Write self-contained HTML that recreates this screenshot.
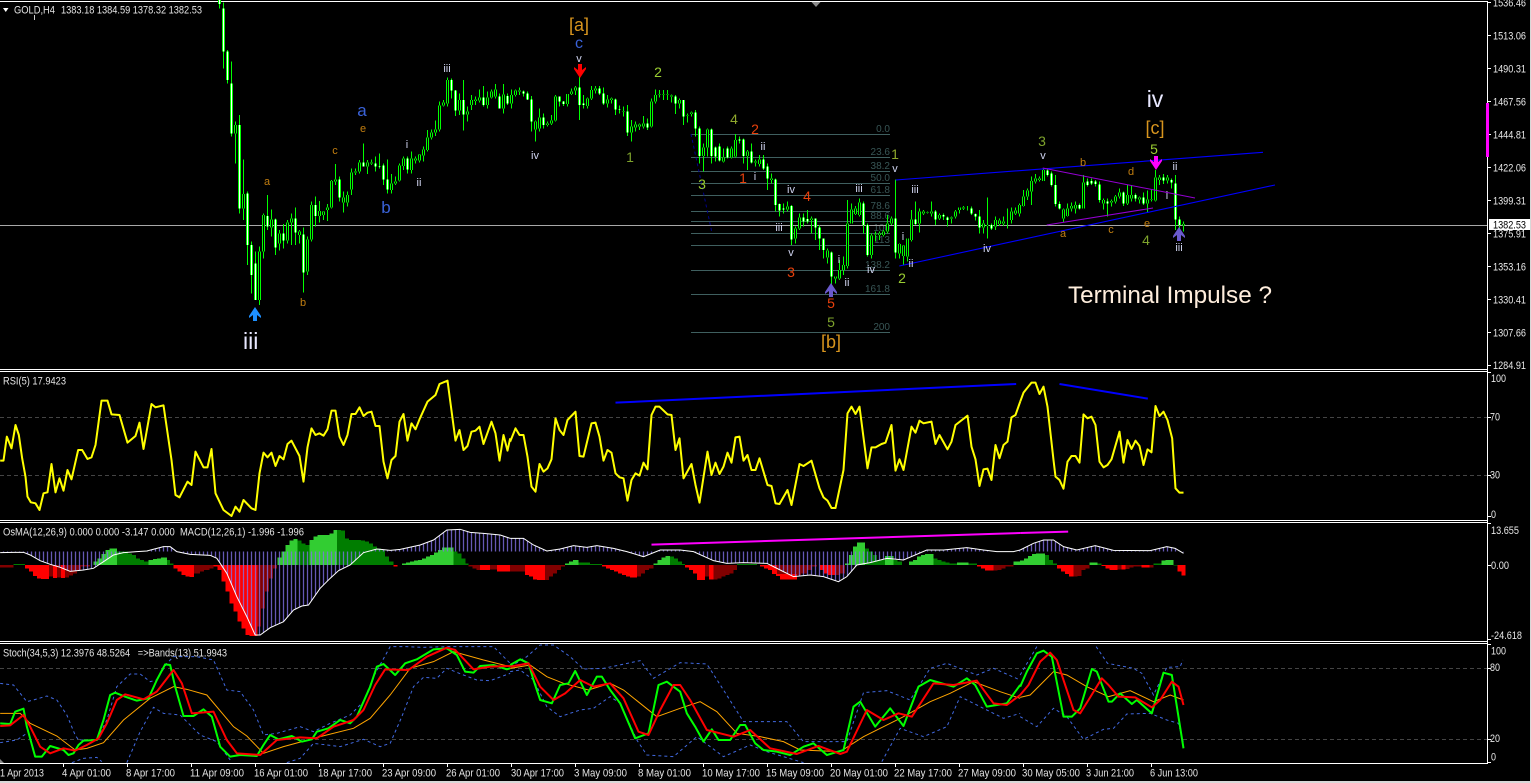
<!DOCTYPE html>
<html><head><meta charset="utf-8"><title>GOLD,H4</title>
<style>
html,body{margin:0;padding:0;background:#000;width:1531px;height:783px;overflow:hidden}
svg{display:block;font-family:"Liberation Sans",sans-serif}
text{fill:#e4e4e4;font-size:11px}
.k{stroke:#0f0;stroke-width:3;fill:none}
.o{stroke:#0f0;stroke-width:9;fill:none}
.wi{stroke:#fff;stroke-width:3;fill:none}
.bi{stroke:#000;stroke-width:3;fill:none}
.rsi{fill:none;stroke:#ff0;stroke-width:6;stroke-linejoin:round}
.ml{fill:none;stroke:#fff;stroke-width:3}
.sg{fill:none;stroke:#0f0;stroke-width:6;stroke-linejoin:round}
.sr{fill:none;stroke:#f00;stroke-width:6;stroke-linejoin:round}
.so{fill:none;stroke:#ffa500;stroke-width:3}
.sb{fill:none;stroke:#4169e1;stroke-width:3;stroke-dasharray:9 9}
.lb text,text.l{fill:#d0d4f0;font-size:11px;text-anchor:middle}
text.o1{fill:#c27e10;font-size:11px;text-anchor:middle}
text.br{fill:#d8951e;font-size:18px;text-anchor:middle}
text.g{fill:#9acd32;font-size:14px;text-anchor:middle}
text.r{fill:#e8400c;font-size:14px;text-anchor:middle}
text.b{fill:#3a62d8;font-size:17px;text-anchor:middle}
text.w{fill:#e8e8ff;font-size:23px;text-anchor:middle}
text.f{fill:#385656;font-size:10px;text-anchor:end}
text.ax{font-size:11px;fill:#e8e8e8}
</style></head><body>
<svg width="1531" height="783" viewBox="0 0 1531 783" xmlns="http://www.w3.org/2000/svg">
<defs>
<path id="W1" d="M658 0V12M670 25V155M682 155V240M694 250V400M718 375V625M742 580V735M754 735V825M766 790V900M802 648V680M826 658V742M850 700V722M886 655V698M910 703V818M946 615V648M1018 538V592M1090 487V500M1126 490V500M1138 498V500M1150 497V538M1162 538V568M1222 475V508M1354 240V272M1366 272V332M1390 300V344M1450 292V315M1498 290V325M1522 288V310"/>
<path id="B1" d="M706 375V400M730 582V625M778 755V900M790 645V755M814 658V682M838 700V730M862 668V722M874 655V668M898 695V705M922 718V815M934 615V718M958 633V648M970 635V645M982 622V630M994 543V622M1006 538V545M1030 592V608M1042 585V608M1054 518V568M1066 515V518M1078 487V515M1102 487V500M1114 487V490M1174 550V570M1186 545V550M1198 497V542M1210 475V498M1234 475V510M1246 475V482M1258 464V482M1270 448V466M1282 412V450M1294 397V412M1306 388V397M1318 316V388M1330 308V316M1342 240V310M1378 300V332M1402 334V344M1414 300V315M1426 298V303M1438 292V302M1462 292V315M1474 275V292M1486 268V290M1510 283V325"/>
<path id="W2" d="M40 275V280M52 280V298M64 298V365M100 352V375M148 290V305M160 305V312M208 262V315M220 310V315M268 265V280M280 280V310M316 298V328M328 328V330M352 335V398M412 370V382M496 290V310M520 300V350M556 338V385M568 385V468M604 388V468M616 443V470M628 440V482M652 445V472M688 418V422M700 418V468M724 455V488M760 478V505M772 500V535M796 538V615M808 612V632M820 628V625M844 618V718M880 652V665M892 657V665M916 655V682M928 682V715M940 715V750M964 757V830M1060 610V675M1072 675V765M1156 655V758M1216 658V672M1276 635V658M1300 645V650M1312 652V660M1384 625V640M1396 642V650M1408 650V682M1444 675V685"/>
<path id="B2" d="M4 285V310M16 272V285M28 272V275M76 365V388M88 352V385M112 370V375M124 362V370M136 290V362M172 282V312M184 275V282M196 262V272M232 295V318M244 270V296M256 265V272M292 298V310M304 296V300M340 333V335M364 380V398M376 374V382M388 374V380M400 370V380M424 305V380M436 285V305M448 283V285M460 283V285M472 283V285M484 286V290M508 300V310M532 347V345M544 342V338M580 443V468M592 388V443M640 472V485M664 445V472M676 420V470M712 455V468M736 487V485M748 478V492M784 535V540M832 620V628M856 685V715M868 652V685M904 655V660M952 752V772M976 830V835M988 810V835M1000 795V810M1012 670V798M1024 628V670M1036 625V642M1048 608V645M1084 706V765M1096 703V705M1108 700V705M1120 695V705M1132 670V695M1144 655V670M1168 732V760M1180 737V768M1192 715V770M1204 658V720M1228 635V670M1240 635V640M1252 638V636M1264 635V640M1288 645V655M1324 652V655M1336 635V650M1348 630V622M1360 625V622M1372 622V622M1420 670V682M1432 675V678M1456 660V680M1468 662V672M1480 665V670M1492 660V660M1504 635V660M1516 632V640M1528 615V640"/>
<path id="W3" d="M82 512V525M94 520V555M106 555V612M118 612V625M178 615V625M202 545V555M214 543V550M226 545V552M238 553V600M262 605V610M310 578V610M346 585V595M370 592V610M430 532V542M454 540V548M466 550V658M478 658V675"/>
<path id="B3" d="M10 590V618M22 572V590M34 543V575M46 535V545M58 535V540M70 510V543M130 628V655M142 625V648M154 618V625M166 615V625M190 548V625M250 600V610M274 603V608M286 590V605M298 578V590M322 585V610M334 585V595M358 592V598M382 598V610M394 600V598M406 532V602M418 532V540M442 532V542M490 672V676"/>
<pattern id="p1" patternUnits="userSpaceOnUse" width="12" height="12"><rect x="8.5" width="3" height="12" fill="#8271e8"/></pattern>
<pattern id="p2" patternUnits="userSpaceOnUse" width="12" height="12"><rect x="2.5" width="3" height="12" fill="#8271e8"/></pattern>
</defs>

<!-- frame -->
<g fill="#fff" shape-rendering="crispEdges">
<rect x="0" y="1" width="1488" height="1"/>
<rect x="0" y="369" width="1488" height="1"/><rect x="0" y="371" width="1488" height="1"/>
<rect x="0" y="520" width="1488" height="1"/><rect x="0" y="522" width="1488" height="1"/>
<rect x="0" y="641" width="1488" height="1"/><rect x="0" y="643" width="1488" height="1"/>
<rect x="0" y="763" width="1488" height="1"/>
<rect x="1487" y="1" width="1" height="763"/>
<rect x="0" y="781" width="1531" height="2" fill="#d8d8d8"/>
<rect x="1530" y="0" width="1" height="783" fill="#d8d8d8"/>
</g>

<!-- indicator grid -->
<g stroke="#444" stroke-dasharray="4 3" shape-rendering="crispEdges">
<path d="M0 417.5H1487M0 475.5H1487M0 668.5H1487M0 739.5H1487"/>
</g>

<!-- fib levels -->
<path d="M691 134.5H890M691 157.5H890M691 171.5H890M691 183.5H890M691 195.5H890M691 211.5H890M691 221.5H890M691 233.5H890M691 245.5H890M691 270.5H890M691 294.5H890M691 332.5H890" stroke="#3f5f5f" shape-rendering="crispEdges"/>
<path d="M691 134L712 233" stroke="#00008b" stroke-dasharray="3 3" fill="none"/>
<g>
<text class="f" x="890" y="132">0.0</text><text class="f" x="890" y="155">23.6</text><text class="f" x="890" y="169">38.2</text><text class="f" x="890" y="181">50.0</text><text class="f" x="890" y="193">61.8</text><text class="f" x="890" y="209">78.6</text><text class="f" x="890" y="219">88.6</text><text class="f" x="890" y="231">100</text><text class="f" x="890" y="243">113</text><text class="f" x="890" y="268">138.2</text><text class="f" x="890" y="292">161.8</text><text class="f" x="890" y="330">200</text>
</g>

<!-- price line -->
<rect x="0" y="225" width="1487" height="1" fill="#a8a8a8" shape-rendering="crispEdges"/>

<!-- candles -->
<g transform="translate(.17 0) scale(.33333)" shape-rendering="crispEdges">
<path class="k" d="M658 0V25M670 8V205M682 150V250M694 185V410M706 365V490M718 345V640M730 478V660M742 575V795M754 725V880M766 755V900M778 740V915M790 640V775M802 585V690M814 628V710M826 655V765M838 690V752M850 672V745M862 660V730M874 640V735M886 622V735M898 690V730M910 682V878M922 710V825M934 605V725M946 590V680M958 603V668M970 633V660M982 612V663M994 540V625M1006 492V555M1018 530V605M1030 575V638M1042 575V620M1054 505V585M1066 505V525M1078 480V520M1090 430V500M1102 480V522M1114 478V495M1126 470V515M1138 460V505M1150 490V555M1162 478V580M1174 522V580M1186 530V555M1198 490V545M1210 470V510M1222 470V520M1234 455V520M1246 470V490M1258 462V488M1270 440V485M1282 390V455M1294 388V418M1306 362V408M1318 305V395M1330 300V320M1342 232V320M1354 235V295M1366 270V348M1378 280V345M1390 240V392M1402 320V365M1414 285V330M1426 290V315M1438 268V308M1450 258V320M1462 275V325M1474 268V295M1486 252V295M1498 280V325M1510 252V340M1522 280V315"/>
<use href="#W1" class="o"/><use href="#B1" class="o"/><use href="#W1" class="wi"/><use href="#B1" class="bi"/>
</g>
<g transform="translate(510.17 0) scale(.33333)" shape-rendering="crispEdges">
<path class="k" d="M4 268V325M16 268V290M28 262V285M40 272V290M52 275V300M64 288V395M76 362V425M88 325V395M100 340V385M112 365V380M124 345V375M136 285V365M148 290V320M160 303V318M172 282V320M184 265V285M196 258V285M208 225V360M220 285V325M232 292V325M244 258V300M256 258V280M268 258V285M280 262V315M292 285V322M304 293V310M316 295V345M328 316V340M340 320V350M352 315V408M364 360V425M376 365V395M388 370V390M400 348V385M412 355V390M424 295V382M436 268V310M448 270V292M460 270V300M472 270V300M484 283V308M496 285V342M508 295V325M520 300V375M532 340V368M544 335V350M556 330V410M568 380V490M580 430V515M592 385V470M604 385V490M616 440V485M628 430V485M640 445V488M652 440V475M664 440V475M676 402V472M688 410V430M700 415V490M712 450V510M724 430V490M736 478V500M748 465V500M760 465V510M772 490V570M784 520V550M796 535V635M808 610V650M820 610V640M832 605V635M844 615V735M856 680V730M868 640V690M880 640V680M892 630V670M904 650V700M916 655V720M928 675V750M940 715V775M952 745V790M964 755V855M976 830V850M988 780V840M1000 770V825M1012 600V805M1024 610V670M1036 618V645M1048 595V650M1060 605V700M1072 670V770M1084 700V775M1096 695V725M1108 695V720M1120 690V710M1132 645V700M1144 650V675M1156 538V775M1168 730V775M1180 735V795M1192 715V785M1204 630V725M1216 605V675M1228 625V698M1240 630V645M1252 635V640M1264 605V650M1276 630V675M1288 640V660M1300 640V660M1312 650V680M1324 650V670M1336 630V655M1348 625V640M1360 618V630M1372 618V632M1384 620V645M1396 640V662M1408 630V700M1420 660V700M1432 592V715M1444 670V690M1456 650V690M1468 655V678M1480 650V678M1492 625V685M1504 622V670M1516 622V645M1528 610V650"/>
<use href="#W2" class="o"/><use href="#B2" class="o"/><use href="#W2" class="wi"/><use href="#B2" class="bi"/>
</g>
<g transform="translate(1020.17 0) scale(.33333)" shape-rendering="crispEdges">
<path class="k" d="M10 570V620M22 565V600M34 530V615M46 522V550M58 530V545M70 505V540M82 505V530M94 515V560M106 525V620M118 605V628M130 625V668M142 610V650M154 608V635M166 605V640M178 610V628M190 525V625M202 535V560M214 535V555M226 540V560M238 545V608M250 595V628M262 595V650M274 598V620M286 585V610M298 565V595M310 575V618M322 555V615M334 555V605M346 580V605M358 590V610M370 578V615M382 572V638M394 570V605M406 510V605M418 525V555M430 522V552M442 525V550M454 535V565M466 525V690M478 650V700M490 665V695"/>
<use href="#W3" class="o"/><use href="#B3" class="o"/><use href="#W3" class="wi"/><use href="#B3" class="bi"/>
</g>

<!-- trend lines -->
<path d="M895.7 180L1263 152.3M899.3 266L1275 185" stroke="#00f" fill="none" stroke-width="1.1"/>
<path d="M1042.7 168L1195 198M1046.7 225L1153 208" stroke="#9400d3" fill="none"/>

<!-- arrows -->
<polygon transform="translate(255 307)" points="0,0 6,9 6,11 2,8 2,14 -2,14 -2,8 -6,11 -6,9" fill="#1e90ff"/>
<polygon transform="translate(580 78) scale(1 -1)" points="0,0 6,9 6,11 2,8 2,14 -2,14 -2,8 -6,11 -6,9" fill="#f00"/>
<polygon transform="translate(831 283)" points="0,0 6,9 6,11 2,8 2,14 -2,14 -2,8 -6,11 -6,9" fill="#6a5acd"/>
<polygon transform="translate(1156 170) scale(1 -1)" points="0,0 6,9 6,11 2,8 2,14 -2,14 -2,8 -6,11 -6,9" fill="#f0f"/>
<polygon transform="translate(1179 227)" points="0,0 6,9 6,11 2,8 2,14 -2,14 -2,8 -6,11 -6,9" fill="#6a5acd"/>

<!-- wave labels -->
<text class="b" x="362" y="116">a</text>
<text class="b" x="386" y="213">b</text>
<text class="b" x="579" y="48" style="font-size:16px">c</text>
<text class="o1" x="363" y="132">e</text><text class="o1" x="335" y="154">c</text><text class="o1" x="267" y="185">a</text><text class="o1" x="303" y="306">b</text>
<text class="o1" x="1083" y="166">b</text><text class="o1" x="1131" y="175">d</text><text class="o1" x="1147" y="227">e</text><text class="o1" x="1063" y="237">a</text><text class="o1" x="1111" y="233">c</text>
<text class="l" x="407" y="148">i</text><text class="l" x="419" y="186">ii</text><text class="l" x="447" y="72">iii</text>
<text class="l" x="579" y="62">v</text><text class="l" x="535" y="159">iv</text><text class="l" x="763" y="150">ii</text><text class="l" x="755" y="180">i</text><text class="l" x="791" y="193">iv</text><text class="l" x="779" y="231">iii</text><text class="l" x="791" y="256">v</text><text class="l" x="859" y="192">iii</text><text class="l" x="915" y="193">iii</text><text class="l" x="895" y="172">v</text><text class="l" x="839" y="263">i</text><text class="l" x="847" y="286">ii</text><text class="l" x="871" y="273">iv</text><text class="l" x="903" y="240">i</text><text class="l" x="911" y="267">ii</text><text class="l" x="987" y="252">iv</text>
<text class="l" x="1043" y="159">v</text><text class="l" x="1175" y="170">ii</text><text class="l" x="1167" y="199">i</text><text class="l" x="1179" y="251">iii</text>
<text class="br" x="579" y="31">[a]</text><text class="br" x="831" y="348">[b]</text><text class="br" x="1155" y="134">[c]</text>
<text class="g" x="658" y="77">2</text><text class="g" x="630" y="162" style="fill:#7ea32c">1</text><text class="g" x="734" y="124" style="fill:#8fa82c">4</text><text class="g" x="702" y="189">3</text><text class="g" x="895" y="159" style="fill:#8fa82c">1</text><text class="g" x="902" y="283">2</text><text class="g" x="831" y="327" style="fill:#7ea32c">5</text><text class="g" x="1042" y="146" style="fill:#7ea32c">3</text><text class="g" x="1154" y="154">5</text><text class="g" x="1146" y="245" style="fill:#7ea32c">4</text>
<text class="r" x="755" y="134">2</text><text class="r" x="743" y="183">1</text><text class="r" x="807" y="201">4</text><text class="r" x="791" y="277">3</text><text class="r" x="831" y="308">5</text>
<text class="w" x="250.700" y="349">iii</text><text class="w" x="1155" y="107">iv</text>
<text x="1068" y="303" style="font-size:24px;fill:#ffeedd" textLength="204" lengthAdjust="spacingAndGlyphs">Terminal Impulse ?</text>

<!-- header -->
<polygon points="3,8 8.500,8 5.750,12" fill="#fff"/>
<rect x="34" y="15" width="1" height="5" fill="#ccc"/>
<polygon points="811.500,2 820.500,2 816,7" fill="#8a8a8a"/>
<text x="14" y="13.500" textLength="41" lengthAdjust="spacingAndGlyphs">GOLD,H4</text>
<text x="61" y="13.500" textLength="141" lengthAdjust="spacingAndGlyphs">1383.18 1384.59 1378.32 1382.53</text>

<!-- price axis -->
<g shape-rendering="crispEdges" stroke="#fff">
<path d="M1488 2.500H1491M1488 35.500H1491M1488 68.500H1491M1488 101.500H1491M1488 134.500H1491M1488 167.500H1491M1488 200.500H1491M1488 233.500H1491M1488 266.500H1491M1488 299.500H1491M1488 332.500H1491M1488 365.500H1491M1488 372.500H1491M1488 417.500H1491M1488 475.500H1491M1488 516.500H1491M1488 523.500H1491M1488 565.500H1491M1488 639.500H1491M1488 644.500H1491M1488 668.500H1491M1488 739.500H1491M1488 762.500H1491"/>
</g>
<g class="ax">
<text class="ax" x="1493" y="6.500" textLength="33" lengthAdjust="spacingAndGlyphs">1536.46</text>
<text class="ax" x="1493" y="39.500" textLength="33" lengthAdjust="spacingAndGlyphs">1513.06</text>
<text class="ax" x="1493" y="72.500" textLength="33" lengthAdjust="spacingAndGlyphs">1490.31</text>
<text class="ax" x="1493" y="105.500" textLength="33" lengthAdjust="spacingAndGlyphs">1467.56</text>
<text class="ax" x="1493" y="138.500" textLength="33" lengthAdjust="spacingAndGlyphs">1444.81</text>
<text class="ax" x="1493" y="171.500" textLength="33" lengthAdjust="spacingAndGlyphs">1422.06</text>
<text class="ax" x="1493" y="204.500" textLength="33" lengthAdjust="spacingAndGlyphs">1399.31</text>
<text class="ax" x="1493" y="237.500" textLength="33" lengthAdjust="spacingAndGlyphs">1375.91</text>
<text class="ax" x="1493" y="270.500" textLength="33" lengthAdjust="spacingAndGlyphs">1353.16</text>
<text class="ax" x="1493" y="303.500" textLength="33" lengthAdjust="spacingAndGlyphs">1330.41</text>
<text class="ax" x="1493" y="336.500" textLength="33" lengthAdjust="spacingAndGlyphs">1307.66</text>
<text class="ax" x="1493" y="369" textLength="33" lengthAdjust="spacingAndGlyphs">1284.91</text>
</g>
<rect x="1489" y="219" width="41" height="11" fill="#fff" shape-rendering="crispEdges"/>
<text x="1493" y="228.500" style="fill:#000" textLength="33" lengthAdjust="spacingAndGlyphs">1382.53</text>
<rect x="1486" y="103" width="3" height="54" fill="#f0f" shape-rendering="crispEdges"/>
<text class="ax" x="1491" y="382" textLength="15" lengthAdjust="spacingAndGlyphs">100</text><text class="ax" x="1490" y="420.500" textLength="10" lengthAdjust="spacingAndGlyphs">70</text><text class="ax" x="1490" y="478.500" textLength="10" lengthAdjust="spacingAndGlyphs">30</text><text class="ax" x="1491" y="518" textLength="5" lengthAdjust="spacingAndGlyphs">0</text>
<text class="ax" x="1491" y="534" textLength="28" lengthAdjust="spacingAndGlyphs">13.655</text><text class="ax" x="1491" y="569" textLength="18" lengthAdjust="spacingAndGlyphs">0.00</text><text class="ax" x="1491" y="639" textLength="31" lengthAdjust="spacingAndGlyphs">-24.618</text>
<text class="ax" x="1491" y="654.500" textLength="15" lengthAdjust="spacingAndGlyphs">100</text><text class="ax" x="1490" y="671" textLength="10" lengthAdjust="spacingAndGlyphs">80</text><text class="ax" x="1490" y="742" textLength="10" lengthAdjust="spacingAndGlyphs">20</text><text class="ax" x="1491" y="760.500" textLength="5" lengthAdjust="spacingAndGlyphs">0</text>

<!-- indicator labels -->
<text x="3" y="384.500" textLength="63" lengthAdjust="spacingAndGlyphs">RSI(5) 17.9423</text>
<text x="3" y="535.500" textLength="301" lengthAdjust="spacingAndGlyphs" xml:space="preserve">OsMA(12,26,9) 0.000 0.000 -3.147 0.000  MACD(12,26,1) -1.996 -1.996</text>
<text x="3" y="656.500" textLength="224" lengthAdjust="spacingAndGlyphs" xml:space="preserve">Stoch(34,5,3) 12.3976 48.5264   =&gt;Bands(13) 51.9943</text>

<!-- PANEL 1 -->
<g transform="translate(.17 370) scale(.33333)">
<polyline class="rsi" points="0,272 10,272 20,200 34,235 46,165 56,195 66,265 76,320 82,380 92,397 106,400 118,420 130,370 142,367 154,282 166,367 178,325 190,362 202,300 214,328 234,240 246,240 262,267 274,262 286,225 304,92 322,92 334,133 358,135 382,218 406,198 418,158 430,237 454,102 466,112 490,106 514,270 526,375 538,382 562,335 574,345 586,245 610,292 622,292 634,237 646,370 670,420 694,438 706,410 718,425 730,390 754,415 766,420 778,310 790,248 802,262 814,248 826,288 838,258 850,268 862,222 874,212 898,258 910,335 922,232 934,175 946,195 958,190 970,197 982,178 994,122 1006,122 1018,200 1030,225 1042,195 1054,132 1066,132 1078,112 1090,138 1102,128 1114,125 1126,168 1138,168 1150,275 1162,325 1174,270 1186,258 1198,155 1210,132 1222,212 1234,160 1246,178 1258,148 1282,95 1306,75 1318,42 1342,32 1366,212 1378,180 1390,240 1402,228 1414,185 1426,182 1438,170 1450,222 1474,155 1486,190 1498,272 1510,195 1522,242 1530,205"/>
<g shape-rendering="crispEdges">
<path fill="#f00" d="M75 585V595H87V605H99V618H111V625H123V627H147V585ZM159 585V624H171V585ZM183 585V624H195V585ZM520 585V595H532V605H544V615H556V620H568V621H582V585ZM640 585V590H652V600H664V635H676V665H688V700H700V725H712V755H724V775H736V795H748V798H772V585ZM1180 585V590H1192V585ZM1440 585V600H1470V585ZM1490 585V605H1530V585Z"/>
<path fill="#800000" d="M0 585V592H40V585ZM147 585V620H159V585ZM171 585V622H183V585ZM195 585V622H207V617H219V610H231V600H243V590H270V585ZM582 585V610H600V605H612V600H628V595H640V585ZM772 585V770H782V715H794V665H806V625H818V595H830V585ZM1405 585V590H1417V595H1429V600H1440V585ZM1470 585V598H1490V585Z"/>
<path fill="#32cd32" d="M280 585V575H292V565H304V552H316V540H328V535H350V585ZM445 585V570H458V567H470V565H482V563H500V585ZM832 585V563H844V545H856V525H868V512H880V507H892V585ZM928 585V510H940V500H952V495H988V490H1000V480H1010V585ZM1205 585V580H1217V578H1229V575H1241V572H1253V570H1265V565H1277V560H1289V555H1301V548H1313V540H1325V532H1360V585Z"/>
<path fill="#007d00" d="M40 585V582H75V585ZM350 585V545H384V550H396V555H408V565H420V570H432V575H445V585ZM500 585V570H510V580H520V585ZM892 585V512H904V520H916V525H928V585ZM1010 585V480H1022V482H1034V505H1046V510H1082V512H1094V515H1106V520H1118V530H1130V535H1142V540H1154V560H1166V575H1180V585ZM1360 585V545H1372V550H1384V565H1396V580H1405V585Z"/>
<polygon fill="url(#p1)" points="0,545 0,548 40,547 70,547 90,555 120,572 150,583 180,592 210,604 250,600 280,595 310,575 340,555 370,548 370,545 410,545 440,543 470,535 490,530 510,530 530,545 570,553 630,556 650,565 680,610 710,680 740,740 765,795 780,795 810,773 850,755 880,720 905,708 925,705 960,655 990,625 1015,602 1050,585 1090,548 1130,537 1170,541 1200,538 1260,525 1300,510 1340,480 1380,478 1410,487 1450,490 1500,495 1530,505 1530,545"/>
</g>
<polyline class="ml" points="0,548 40,547 70,547 90,555 120,572 150,583 180,592 210,604 250,600 280,595 310,575 340,555 370,548 410,545 440,543 470,535 490,530 510,530 530,545 570,553 630,556 650,565 680,610 710,680 740,740 765,795 780,795 810,773 850,755 880,720 905,708 925,705 960,655 990,625 1015,602 1050,585 1090,548 1130,537 1170,541 1200,538 1260,525 1300,510 1340,480 1380,478 1410,487 1450,490 1500,495 1530,505"/>
<polyline class="sb" points="0,940 40,945 80,995 100,990 140,978 170,990 200,1035 225,1095 235,1110 290,1110 320,1050 350,950 390,912 420,912 450,935 470,930 500,880 520,860 590,860 640,870 680,960 720,965 760,1020 790,1095 830,1090 900,1070 940,1085 990,1060 1050,1035 1090,995 1120,920 1170,830 1220,830 1270,832 1340,830 1430,830 1480,830 1530,880"/>
<polyline class="sb" points="0,1118 50,1110 80,1090"/>
<polyline class="sb" points="215,1178 250,1165 290,1162 305,1175"/>
<polyline class="sb" points="380,1178 420,1085 460,1012 490,1030 540,1035 600,1095 650,1115 690,1170"/>
<polyline class="sb" points="860,1178 900,1165 940,1120 1020,1130 1090,1108 1140,1130 1170,1120 1205,1040 1240,950 1270,922 1310,925 1340,895 1390,915 1430,930 1470,932 1530,910"/>
<polyline class="so" points="0,1030 60,1030 90,1060 170,1098 225,1140 260,1135 310,1118 370,1050 450,985 520,950 560,958 620,975 700,1070 740,1098 790,1150 850,1130 905,1115 960,1100 1060,1075 1110,1045 1170,975 1230,895 1300,875 1360,845 1450,870 1530,890"/>
<polyline class="sg" points="0,1060 30,1062 45,1025 70,1016 80,1070 105,1160 125,1160 150,1128 190,1140 205,1155 220,1150 235,1125 250,1112 290,1110 310,1050 330,975 345,968 375,980 410,992 445,985 470,930 495,883 510,885 525,950 550,1038 580,1038 610,1018 635,1040 660,1130 690,1160 720,1155 770,1158 790,1125 810,1095 835,1108 875,1098 905,1115 935,1108 950,1085 985,1075 1020,1050 1050,1060 1070,1040 1110,950 1130,890 1150,882 1185,915 1215,880 1250,868 1300,838 1340,835 1370,855 1395,905 1420,908 1440,888 1480,885 1520,898 1530,895"/>
<polyline class="sr" points="0,1068 30,1066 70,1035 90,1070 120,1130 150,1150 190,1135 225,1142 260,1125 295,1105 320,1060 350,990 375,973 430,988 470,965 520,900 545,940 575,1030 640,1025 680,1110 710,1150 780,1155 830,1110 900,1102 950,1105 1000,1070 1060,1050 1090,1020 1125,945 1155,898 1225,900 1280,860 1340,833 1365,840 1420,898 1470,890 1530,888"/>
</g>

<!-- PANEL 2 -->
<g transform="translate(510.17 370) scale(.33333)">
<polyline class="rsi" points="0,215 16,175 28,195 40,195 52,260 64,350 76,365 88,282 100,305 112,295 124,268 136,145 148,180 160,195 172,150 196,125 208,258 220,260 244,160 256,158 268,200 280,272 292,240 304,248 316,310 328,322 340,325 352,392 364,330 376,310 388,317 400,278 412,298 424,135 436,110 448,110 472,133 484,135 496,240 508,205 520,325 544,282 556,345 568,398 592,245 604,315 616,278 628,312 640,290 652,248 664,278 676,202 688,200 700,272 712,255 724,300 736,300 748,265 772,345 784,348 796,400 808,402 832,360 844,405 868,282 880,288 904,272 928,355 940,382 952,392 964,414 976,414 1000,300 1012,130 1024,110 1036,132 1048,110 1072,295 1084,232 1096,232 1114,222 1126,218 1144,165 1156,302 1168,268 1180,300 1204,170 1216,188 1228,152 1240,160 1264,155 1276,222 1288,195 1312,238 1324,215 1336,165 1372,137 1384,230 1396,268 1408,348 1420,298 1432,296 1444,330 1456,225 1468,265 1480,225 1492,215 1504,142 1516,135 1530,95"/>
<path d="M316 98L1518 42" stroke="#00f" stroke-width="6" fill="none"/>
<g shape-rendering="crispEdges">
<path fill="#f00" d="M45 585V615H57V620H69V628H81V630H105V585ZM275 585V590H287V595H299V600H311V605H323V610H335V615H347V620H359V622H380V585ZM525 585V592H537V600H549V610H561V630H585V585ZM597 585V628H610V585ZM750 585V590H762V595H774V600H786V612H798V618H810V628H860V585ZM930 585V600H942V610H954V615H975V585ZM1400 585V590H1412V595H1424V602H1450V585Z"/>
<path fill="#800000" d="M0 585V604H45V585ZM105 585V630H117V620H129V610H141V600H153V590H165V585ZM380 585V620H392V610H404V600H416V595H430V585ZM585 585V620H597V585ZM610 585V628H622V625H634V620H646V615H658V610H670V600H680V585ZM800 585V612H860V615H872V610H890V600H905V590H920V585ZM975 585V615H990V610H1005V585ZM1450 585V602H1462V600H1474V595H1486V590H1510V585Z"/>
<path fill="#32cd32" d="M165 585V580H177V575H189V570H205V585ZM430 585V580H442V570H454V562H466V558H480V585ZM1005 585V580H1017V555H1029V530H1041V517H1064V585ZM1125 585V558H1150V585ZM1197 585V575H1209V570H1221V560H1233V555H1245V552H1270V585ZM1340 585V577H1375V585ZM1510 585V575H1530V585Z"/>
<path fill="#007d00" d="M205 585V578H240V582H275V585ZM480 585V560H492V565H504V575H516V582H525V585ZM680 585V582H740V585ZM1064 585V535H1076V545H1088V555H1100V570H1125V585ZM1150 585V570H1162V575H1175V585ZM1270 585V565H1282V570H1294V575H1306V578H1318V580H1340V585ZM1375 585V580H1400V585Z"/>
<polygon fill="url(#p2)" points="0,545 0,505 40,505 70,525 110,543 150,537 190,527 230,532 260,527 310,535 350,545 400,560 450,540 510,540 550,545 610,572 650,580 700,578 770,580 810,600 850,620 900,615 940,620 985,635 1010,620 1040,585 1080,578 1130,565 1180,570 1250,540 1300,540 1370,533 1420,540 1460,545 1510,545 1530,540 1530,545"/>
</g>
<polyline class="ml" points="0,505 40,505 70,525 110,543 150,537 190,527 230,532 260,527 310,535 350,545 400,560 450,540 510,540 550,545 610,572 650,580 700,578 770,580 810,600 850,620 900,615 940,620 985,635 1010,620 1040,585 1080,578 1130,565 1180,570 1250,540 1300,540 1370,533 1420,540 1460,545 1510,545 1530,540"/>
<path d="M424 524L1530 489" stroke="#f0f" stroke-width="6" fill="none"/>
<polyline class="sb" points="0,890 50,860 90,825 130,825 180,860 220,897 280,895 390,872 430,925 510,878 590,882 640,960 700,1055 830,1055 880,1115 1010,1115 1060,968 1130,962 1200,990 1260,895 1310,880 1400,915 1450,895 1530,930"/>
<polyline class="sb" points="0,905 30,900 70,930 110,1010 150,1040 210,1020 250,1015 300,980 330,1000 380,1110 410,1155 490,1160 560,1100 640,1160 720,1125 770,1145 880,1178"/>
<polyline class="sb" points="1115,1175 1170,1075 1240,1100 1310,1070 1350,980 1390,1000 1480,1045 1530,1030"/>
<polyline class="so" points="0,895 60,885 110,920 160,940 235,960 300,940 340,960 440,1040 510,1015 570,995 620,1025 680,1090 750,1100 820,1115 870,1140 990,1145 1060,1100 1180,1040 1260,995 1320,970 1390,935 1470,965 1530,985"/>
<polyline class="sg" points="0,885 30,868 55,880 70,930 90,990 125,1000 150,945 175,940 195,903 230,975 260,920 275,920 300,960 330,1000 375,1105 415,1090 445,945 470,935 510,965 530,1030 555,1070 580,1115 605,1078 625,1110 660,1110 690,1065 705,1065 735,1120 760,1140 800,1145 840,1155 880,1130 910,1120 950,1155 1000,1140 1030,1010 1050,995 1095,1070 1140,1015 1180,1068 1225,950 1260,930 1330,950 1370,925 1395,945 1430,1010 1490,1000 1530,945"/>
<polyline class="sr" points="0,890 55,880 90,950 130,990 165,970 210,930 250,950 300,940 340,985 385,1085 415,1095 450,1020 490,945 510,945 540,990 590,1080 670,1100 720,1080 780,1135 860,1152 925,1128 990,1152 1010,1145 1070,1020 1120,1050 1165,1030 1205,1040 1270,940 1330,945 1400,932 1450,1000 1490,1005 1530,975"/>
</g>

<!-- PANEL 3 -->
<g transform="translate(1020.17 370) scale(.33333)">
<polyline class="rsi" points="0,95 10,68 34,38 46,38 58,72 70,50 82,110 100,270 106,320 118,330 130,356 142,275 154,258 166,258 178,278 190,133 202,145 214,140 226,165 238,275 250,292 262,285 274,268 298,185 310,278 322,210 334,237 346,212 358,228 370,285 382,238 394,247 406,108 418,138 430,125 442,150 456,205 466,355 478,368 490,368"/>
<path d="M118 42L383 86" stroke="#00f" stroke-width="6" fill="none"/>
<g shape-rendering="crispEdges">
<path fill="#f00" d="M110 585V595H122V605H134V612H146V620H160V585ZM244 585V588H256V595H268V600H292V585ZM304 585V598H316V585ZM364 585V592H388V585ZM472 585V605H484V617H496V585Z"/>
<path fill="#800000" d="M160 585V620H172V618H184V600H196V595H208V585ZM292 585V598H304V585ZM316 585V597H328V593H340V590H364V585ZM388 585V592H400V585Z"/>
<path fill="#32cd32" d="M0 585V572H12V565H24V558H36V552H48V550H75V585ZM208 585V578H232V585ZM424 585V572H436V570H460V585Z"/>
<path fill="#007d00" d="M75 585V555H87V570H99V580H110V585ZM232 585V580H244V585ZM400 585V580H424V585ZM460 585V587H472V585Z"/>
<polygon fill="url(#p1)" points="0,545 0,540 40,520 70,510 100,510 130,530 170,540 225,527 280,541 390,542 440,530 465,535 490,550 490,545"/>
</g>
<polyline class="ml" points="0,540 40,520 70,510 100,510 130,530 170,540 225,527 280,541 390,542 440,530 465,535 490,550"/>
<path d="M0 489L144 485" stroke="#f0f" stroke-width="6" fill="none"/>
<polyline class="sb" points="0,915 50,830"/>
<polyline class="sb" points="228,830 262,880 340,895 365,910 400,975 440,892 480,890 488,870"/>
<polyline class="sb" points="0,1040 50,1070 100,1015 140,1040 190,1108 250,1078 280,1075 320,1032 390,1030 440,1050 475,1060 490,1120"/>
<polyline class="so" points="0,982 30,975 60,945 100,905 140,915 200,950 265,980 330,962 400,995 450,975 490,990"/>
<polyline class="sg" points="0,950 20,905 50,850 70,842 95,860 130,1040 155,1040 180,1015 215,897 230,905 265,995 275,995 300,970 335,1002 350,990 395,1030 430,908 455,915 490,1135"/>
<polyline class="sr" points="0,975 25,945 60,875 90,848 110,870 160,1020 180,1030 205,990 245,925 265,945 295,980 345,982 395,1012 420,990 455,935 475,950 490,1005"/>
</g>

<!-- time axis -->
<polygon points="0,763 4,763 0,759" fill="#888"/>
<path d="M63.500 764V767M127.500 764V767M191.500 764V767M255.500 764V767M319.500 764V767M383.500 764V767M447.500 764V767M511.500 764V767M575.500 764V767M639.500 764V767M703.500 764V767M767.500 764V767M831.500 764V767M895.500 764V767M959.500 764V767M1023.500 764V767M1087.500 764V767M1151.500 764V767" stroke="#fff" shape-rendering="crispEdges"/>
<g>
<text x="0" y="776.500" textLength="44" lengthAdjust="spacingAndGlyphs">1 Apr 2013</text>
<text x="62" y="776.500" textLength="49" lengthAdjust="spacingAndGlyphs">4 Apr 01:00</text>
<text x="126" y="776.500" textLength="49" lengthAdjust="spacingAndGlyphs">8 Apr 17:00</text>
<text x="190" y="776.500" textLength="54" lengthAdjust="spacingAndGlyphs">11 Apr 09:00</text>
<text x="254" y="776.500" textLength="54" lengthAdjust="spacingAndGlyphs">16 Apr 01:00</text>
<text x="318" y="776.500" textLength="54" lengthAdjust="spacingAndGlyphs">18 Apr 17:00</text>
<text x="382" y="776.500" textLength="54" lengthAdjust="spacingAndGlyphs">23 Apr 09:00</text>
<text x="446" y="776.500" textLength="54" lengthAdjust="spacingAndGlyphs">26 Apr 01:00</text>
<text x="511" y="776.500" textLength="53" lengthAdjust="spacingAndGlyphs">30 Apr 17:00</text>
<text x="574" y="776.500" textLength="53" lengthAdjust="spacingAndGlyphs">3 May 09:00</text>
<text x="638" y="776.500" textLength="53" lengthAdjust="spacingAndGlyphs">8 May 01:00</text>
<text x="702" y="776.500" textLength="58" lengthAdjust="spacingAndGlyphs">10 May 17:00</text>
<text x="766" y="776.500" textLength="58" lengthAdjust="spacingAndGlyphs">15 May 09:00</text>
<text x="830" y="776.500" textLength="58" lengthAdjust="spacingAndGlyphs">20 May 01:00</text>
<text x="894" y="776.500" textLength="58" lengthAdjust="spacingAndGlyphs">22 May 17:00</text>
<text x="958" y="776.500" textLength="58" lengthAdjust="spacingAndGlyphs">27 May 09:00</text>
<text x="1022" y="776.500" textLength="58" lengthAdjust="spacingAndGlyphs">30 May 05:00</text>
<text x="1086" y="776.500" textLength="48" lengthAdjust="spacingAndGlyphs">3 Jun 21:00</text>
<text x="1150" y="776.500" textLength="48" lengthAdjust="spacingAndGlyphs">6 Jun 13:00</text>
</g>
</svg>
</body></html>
